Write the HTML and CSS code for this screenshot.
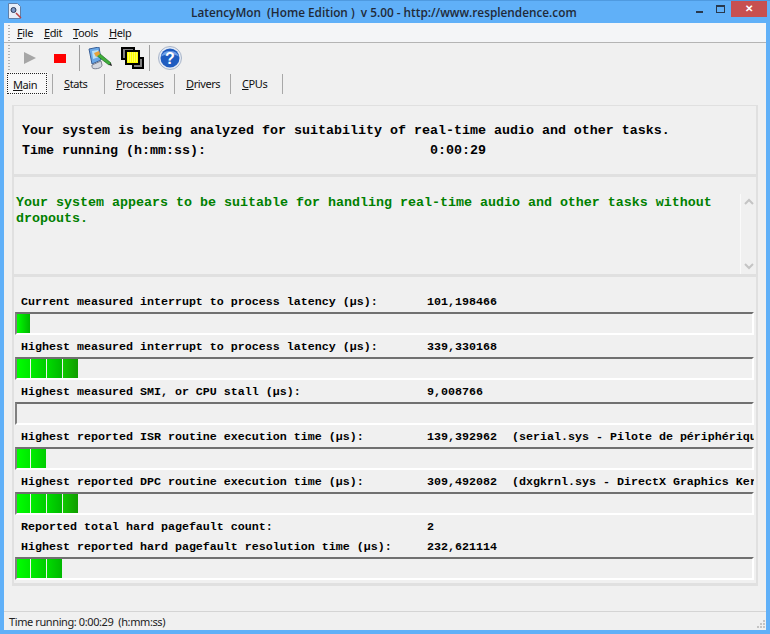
FILE: index.html
```html
<!DOCTYPE html>
<html lang="en">
<head>
    <meta charset="UTF-8">
    <title>LatencyMon (Home Edition) v 5.00</title>
    <link rel="stylesheet" href="styles.css">
</head>
<body>
    <div class="window">
        <div class="titlebar">
            <svg class="app-icon" width="16" height="18" viewBox="0 0 16 18">
                <path d="M1.5 1.5h9l3 3v12h-12z" fill="#e8eef8" stroke="#5f7fa8"/>
                <circle cx="6.5" cy="8" r="2.5" fill="#7d99c8" stroke="#2a3a58"/>
                <path d="M9 11l5 5" stroke="#b84040" stroke-width="1.5"/>
            </svg>
            <div class="title">LatencyMon&nbsp; (Home Edition )&nbsp; v 5.00 - http://www.resplendence.com</div>
            <div class="caption-btns">
                <span class="btn-min"></span>
                <span class="btn-max"></span>
                <span class="btn-close">✕</span>
            </div>
        </div>

        <div class="menubar">
            <span class="gripper"></span>
            <span class="menu-item"><u>F</u>ile</span>
            <span class="menu-item"><u>E</u>dit</span>
            <span class="menu-item"><u>T</u>ools</span>
            <span class="menu-item"><u>H</u>elp</span>
        </div>

        <div class="content">
            <div class="toolbar">
                <span class="gripper"></span>
                <span class="tool tool-play"><svg width="12" height="12" viewBox="0 0 12 12"><path d="M0 0l12 6-12 6z" fill="#a6a6a6"/></svg></span>
                <span class="tool tool-stop"><span class="stop-square"></span></span>
                <span class="tool-sep"></span>
                <span class="tool tool-monitor">
                    <svg width="24" height="23" viewBox="0 0 24 23">
                        <path d="M1 2l10-2 2 13-9 4z" fill="#6aa8e8" stroke="#3a5f96"/>
                        <path d="M4 4l6-1 1 7-6 2z" fill="#b8e0f8"/>
                        <path d="M4 18l9-4 1 4c0 4-10 5-10 2z" fill="#d4d8e0" stroke="#7a8090"/>
                        <path d="M8 8l3-2 12 10-2 2z" fill="#3fae3a" stroke="#1c6a20" stroke-width=".7"/>
                        <path d="M6 6l5-2 1 3-4 3z" fill="#e8a23c"/>
                        <path d="M21 18l2-2 1 3z" fill="#222"/>
                    </svg>
                </span>
                <span class="tool tool-windows">
                    <svg width="23" height="22" viewBox="0 0 23 22">
                        <rect x="1" y="1" width="12" height="11" fill="#808080" stroke="#000" stroke-width="2"/>
                        <rect x="12" y="11" width="10" height="10" fill="#808080" stroke="#000" stroke-width="2"/>
                        <rect x="5" y="4" width="13" height="13" fill="#ffff00" stroke="#000" stroke-width="2"/>
                        <path d="M7 6h9M7 8h9M7 10h9M7 12h9M7 14h9" stroke="#ffffb0" stroke-width="1" stroke-dasharray="1 1" fill="none"/>
                    </svg>
                </span>
                <span class="tool-sep sep-help"></span>
                <span class="tool tool-help">
                    <svg width="24" height="24" viewBox="0 0 24 24">
                        <circle cx="12" cy="12" r="11.5" fill="#e4eaf4" stroke="#a8b4c8"/>
                        <circle cx="12" cy="12" r="9.5" fill="#1f5cc0"/>
                        <path d="M3 10.5a9.5 8 0 0 1 18 0c-6-3-12-3-18 0z" fill="#6f9fe6"/>
                        <text x="12" y="18" class="help-mark">?</text>
                    </svg>
                </span>
            </div>

            <div class="tabs">
                <span class="tab tab-active"><u>M</u>ain</span>
                <span class="tab tab-stats"><u>S</u>tats</span>
                <span class="tab tab-processes"><u>P</u>rocesses</span>
                <span class="tab tab-drivers"><u>D</u>rivers</span>
                <span class="tab tab-cpus"><u>C</u>PUs</span>
            </div>

            <div class="page">
                <div class="panel panel-status">
                    <p>Your system is being analyzed for suitability of real-time audio and other tasks.</p>
                    <p class="time-line"><span class="time-label">Time running (h:mm:ss):</span><span>0:00:29</span></p>
                </div>

                <div class="panel panel-verdict">
                    <p class="verdict">Your system appears to be suitable for handling real-time audio and other tasks without dropouts.</p>
                    <div class="scroller">
                        <svg width="10" height="8" viewBox="0 0 10 8"><path d="M1 6l4-4 4 4" fill="none" stroke="#c4c4c4" stroke-width="2"/></svg>
                        <svg width="10" height="8" viewBox="0 0 10 8"><path d="M1 2l4 4 4-4" fill="none" stroke="#c4c4c4" stroke-width="2"/></svg>
                    </div>
                </div>

                <div class="panel panel-meters">
                    <div class="row"><span class="label">Current measured interrupt to process latency (µs):</span><span class="value">101,198466</span></div>
                    <div class="bar"><span class="cell cell-single"></span></div>

                    <div class="row"><span class="label">Highest measured interrupt to process latency (µs):</span><span class="value">339,330168</span></div>
                    <div class="bar"><span class="cell"></span><span class="cell"></span><span class="cell"></span><span class="cell"></span></div>

                    <div class="row"><span class="label">Highest measured SMI, or CPU stall (µs):</span><span class="value">9,008766</span></div>
                    <div class="bar"></div>

                    <div class="row"><span class="label">Highest reported ISR routine execution time (µs):</span><span class="value value-long">139,392962</span><span class="detail">(serial.sys - Pilote de périphérique série)</span></div>
                    <div class="bar"><span class="cell"></span><span class="cell"></span></div>

                    <div class="row"><span class="label">Highest reported DPC routine execution time (µs):</span><span class="value value-long">309,492082</span><span class="detail">(dxgkrnl.sys - DirectX Graphics Kernel)</span></div>
                    <div class="bar"><span class="cell"></span><span class="cell"></span><span class="cell"></span><span class="cell"></span></div>

                    <div class="row row-plain"><span class="label">Reported total hard pagefault count:</span><span class="value">2</span></div>
                    <div class="row"><span class="label">Highest reported hard pagefault resolution time (µs):</span><span class="value">232,621114</span></div>
                    <div class="bar"><span class="cell"></span><span class="cell"></span><span class="cell cell-end"></span></div>
                </div>
            </div>

            <div class="statusbar">
                <span>Time running: 0:00:29&nbsp; (h:mm:ss)</span>
                <svg class="size-grip" width="9" height="9" viewBox="0 0 9 9">
                    <path d="M6 0h2v2H6zM3 3h2v2H3zM6 3h2v2H6zM0 6h2v2H0zM3 6h2v2H3zM6 6h2v2H6z" fill="#c4c4c4"/>
                </svg>
            </div>
        </div>
    </div>
</body>
</html>
```

FILE: styles.css
```css
* {
    box-sizing: border-box;
    margin: 0;
    padding: 0;
}

html, body {
    width: 770px;
    height: 634px;
    overflow: hidden;
}

body {
    font-family: "Liberation Sans", sans-serif;
    background-color: #60b0f8;
}

.window {
    display: flex;
    flex-direction: column;
    width: 770px;
    height: 634px;
    padding: 0 4px 4px 4px;
    border-top: 1px solid #4f9ae0;
    background-color: #60b0f8;
}

.titlebar {
    display: flex;
    align-items: center;
    flex: 0 0 22px;
    position: relative;
}

.app-icon {
    margin: -2px 0 0 3px;
}

.title {
    position: absolute;
    left: 187px;
    top: 3px;
    font-family: "Open Sans", sans-serif;
    font-size: 11.8px;
    font-weight: 600;
    color: #1f2a38;
    white-space: nowrap;
}

.caption-btns {
    position: absolute;
    top: 0;
    right: -1px;
    display: flex;
    align-items: flex-start;
}

.btn-min {
    width: 7px;
    height: 2px;
    margin: 10px 13px 0 0;
    background-color: #28384c;
}

.btn-max {
    width: 9px;
    height: 8px;
    margin: 4px 6px 0 0;
    border: 1px solid #28384c;
    border-top-width: 2px;
}

.btn-close {
    width: 36px;
    height: 16px;
    background-color: #c75050;
    color: #fff;
    font-size: 10px;
    font-weight: bold;
    line-height: 16px;
    text-align: center;
}

.menubar {
    display: flex;
    align-items: center;
    flex: 0 0 20px;
    background-color: #f4f5f7;
    border-bottom: 1px solid #b4b4b4;
    font-size: 11px;
    letter-spacing: -0.4px;
    font-family: "Noto Sans", sans-serif;
    color: #111;
}

.gripper {
    width: 2px;
    height: 16px;
    margin: 0 7px 0 4px;
    background-image: linear-gradient(#b0b0b0 50%, transparent 50%);
    background-size: 2px 3px;
}

.menu-item {
    margin-right: 11px;
}

.content {
    display: flex;
    flex-direction: column;
    flex: 1;
    background-color: #f0f0f0;
}

.toolbar {
    display: flex;
    align-items: center;
    height: 30px;
    flex: 0 0 30px;
}

.toolbar .gripper {
    height: 26px;
    margin-right: 0;
}

.tool {
    display: flex;
    align-items: center;
    justify-content: center;
}

.tool-play {
    width: 12px;
    margin-left: 14px;
}

.tool-stop {
    width: 12px;
    margin-left: 18px;
}

.stop-square {
    display: block;
    width: 12px;
    height: 9px;
    background-color: #ff0000;
}

.tool-sep {
    width: 1px;
    height: 26px;
    margin-left: 13px;
    background-color: #a0a0a0;
}

.tool-monitor {
    margin-left: 8px;
}

.tool-windows {
    margin-left: 9px;
}

.sep-help {
    margin-left: 5px;
}

.tool-help {
    margin-left: 8px;
}

.help-mark {
    fill: #fff;
    font-family: "Liberation Sans", sans-serif;
    font-size: 16px;
    font-weight: bold;
    text-anchor: middle;
}

.tabs {
    display: flex;
    align-items: stretch;
    height: 22px;
    flex: 0 0 22px;
    margin-left: 3px;
    font-family: "Noto Sans", sans-serif;
    font-size: 11px;
    letter-spacing: -0.4px;
    color: #111;
}

.tab {
    padding: 2px 0 0 11px;
    border-right: 1px solid #a8a8a8;
    height: 20px;
    margin-top: 1px;
    white-space: nowrap;
}

.tab-active {
    width: 40px;
    height: 21px;
    padding: 3px 0 0 5px;
    margin: 0 5px 0 0;
    border: 1px dotted #222;
    outline: 1px solid #f8f8f8;
    background-color: #f8f8f8;
}

.tab-stats { width: 53px; border-left: 1px solid #a8a8a8; }
.tab-processes { width: 70px; }
.tab-drivers { width: 56px; }
.tab-cpus { width: 52px; }

.page {
    flex: 1;
    padding: 10px 8px 0 8px;
    font-family: "Liberation Mono", monospace;
    font-weight: bold;
    color: #000;
}

.panel {
    border: solid #e0e0e0;
    border-width: 0 2px 3px 2px;
}

.panel-status {
    height: 72px;
    padding: 15px 0 0 8px;
    border-top-width: 1px;
    font-size: 13.33px;
    line-height: 20px;
}

.time-label {
    display: inline-block;
    width: 408px;
}

.panel-verdict {
    display: flex;
    height: 100px;
    padding: 18px 0 0 2px;
    font-size: 13.33px;
    line-height: 16px;
    color: #008000;
}

.verdict {
    width: 726px;
}

.scroller {
    display: flex;
    flex-direction: column;
    justify-content: space-between;
    flex: 0 0 16px;
    height: 80px;
    margin: -1px 0 0 -1px;
    padding: 4px 0 4px 3px;
    border-left: 1px solid #fafafa;
}

.scroller svg {
    display: block;
}

.panel-meters {
    height: 309px;
    padding: 18px 2px 0 1px;
    overflow: hidden;
    font-size: 11.67px;
}

.row {
    display: flex;
    height: 14px;
    margin-bottom: 3px;
    padding-left: 6px;
    line-height: 14px;
    white-space: nowrap;
    overflow: hidden;
}

.row-plain {
    margin-bottom: 6px;
}

.label {
    flex: 0 0 406px;
}

.value-long {
    flex: 0 0 85px;
}

.bar {
    display: flex;
    gap: 1px;
    height: 23px;
    margin-bottom: 5px;
    border: solid #fff;
    border-width: 0 2px 2px 0;
    border-top: 2px solid #707070;
    border-left: 2px solid #808080;
}

.cell {
    width: 15px;
    height: 19px;
    background: linear-gradient(to right, #00ff00, #00e800);
}

.cell:nth-child(1) {
    width: 13px;
}

.cell:nth-child(2) {
    background: linear-gradient(to right, #00ee00, #00cc00);
}

.cell:nth-child(3) {
    background: linear-gradient(to right, #00dc00, #00b800);
}

.cell:nth-child(4) {
    background: linear-gradient(to right, #10c800, #109c00);
}

.cell-single {
    background: linear-gradient(to right, #00ff00, #00b400);
}

.cell-end {
    background: linear-gradient(to right, #00d800, #00a000);
}

.statusbar {
    display: flex;
    align-items: center;
    justify-content: space-between;
    flex: 0 0 19px;
    border-top: 1px solid #d4d4d4;
    padding-left: 5px;
    font-family: "Noto Sans", sans-serif;
    font-size: 11px;
    letter-spacing: -0.4px;
    color: #222;
}

.size-grip {
    align-self: flex-end;
    margin-bottom: 1px;
}
```
